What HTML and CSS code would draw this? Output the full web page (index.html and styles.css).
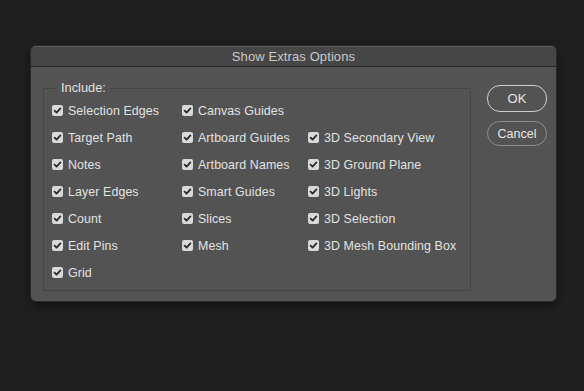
FILE: index.html
```html
<!DOCTYPE html>
<html>
<head>
<meta charset="utf-8">
<link rel="stylesheet" href="styles.css">
</head>
<body>
<div class="dialog">
  <div class="titlebar">Show Extras Options</div>
  <div class="content">
    <fieldset class="group">
      <legend class="legend">Include:</legend>
      <div class="grid">
        <label class="item"><span class="box"><svg viewBox="0 0 11 11"><path d="M2.6 5.6 L4.6 7.6 L8.4 3.4" /></svg></span>Selection Edges</label>
        <label class="item"><span class="box"><svg viewBox="0 0 11 11"><path d="M2.6 5.6 L4.6 7.6 L8.4 3.4" /></svg></span>Canvas Guides</label>
        <span></span>
        <label class="item"><span class="box"><svg viewBox="0 0 11 11"><path d="M2.6 5.6 L4.6 7.6 L8.4 3.4" /></svg></span>Target Path</label>
        <label class="item"><span class="box"><svg viewBox="0 0 11 11"><path d="M2.6 5.6 L4.6 7.6 L8.4 3.4" /></svg></span>Artboard Guides</label>
        <label class="item"><span class="box"><svg viewBox="0 0 11 11"><path d="M2.6 5.6 L4.6 7.6 L8.4 3.4" /></svg></span>3D Secondary View</label>
        <label class="item"><span class="box"><svg viewBox="0 0 11 11"><path d="M2.6 5.6 L4.6 7.6 L8.4 3.4" /></svg></span>Notes</label>
        <label class="item"><span class="box"><svg viewBox="0 0 11 11"><path d="M2.6 5.6 L4.6 7.6 L8.4 3.4" /></svg></span>Artboard Names</label>
        <label class="item"><span class="box"><svg viewBox="0 0 11 11"><path d="M2.6 5.6 L4.6 7.6 L8.4 3.4" /></svg></span>3D Ground Plane</label>
        <label class="item"><span class="box"><svg viewBox="0 0 11 11"><path d="M2.6 5.6 L4.6 7.6 L8.4 3.4" /></svg></span>Layer Edges</label>
        <label class="item"><span class="box"><svg viewBox="0 0 11 11"><path d="M2.6 5.6 L4.6 7.6 L8.4 3.4" /></svg></span>Smart Guides</label>
        <label class="item"><span class="box"><svg viewBox="0 0 11 11"><path d="M2.6 5.6 L4.6 7.6 L8.4 3.4" /></svg></span>3D Lights</label>
        <label class="item"><span class="box"><svg viewBox="0 0 11 11"><path d="M2.6 5.6 L4.6 7.6 L8.4 3.4" /></svg></span>Count</label>
        <label class="item"><span class="box"><svg viewBox="0 0 11 11"><path d="M2.6 5.6 L4.6 7.6 L8.4 3.4" /></svg></span>Slices</label>
        <label class="item"><span class="box"><svg viewBox="0 0 11 11"><path d="M2.6 5.6 L4.6 7.6 L8.4 3.4" /></svg></span>3D Selection</label>
        <label class="item"><span class="box"><svg viewBox="0 0 11 11"><path d="M2.6 5.6 L4.6 7.6 L8.4 3.4" /></svg></span>Edit Pins</label>
        <label class="item"><span class="box"><svg viewBox="0 0 11 11"><path d="M2.6 5.6 L4.6 7.6 L8.4 3.4" /></svg></span>Mesh</label>
        <label class="item"><span class="box"><svg viewBox="0 0 11 11"><path d="M2.6 5.6 L4.6 7.6 L8.4 3.4" /></svg></span>3D Mesh Bounding Box</label>
        <label class="item"><span class="box"><svg viewBox="0 0 11 11"><path d="M2.6 5.6 L4.6 7.6 L8.4 3.4" /></svg></span>Grid</label>
      </div>
    </fieldset>
    <div class="buttons">
      <button class="btn btn-ok">OK</button>
      <button class="btn btn-cancel">Cancel</button>
    </div>
  </div>
</div>
</body>
</html>
```

FILE: styles.css
```css
html, body {
  margin: 0;
  padding: 0;
}
body {
  background: #1f1f1f;
  width: 584px;
  height: 391px;
  padding: 46px 0 0 31px;
  box-sizing: border-box;
  font-family: "Liberation Sans", Arial, sans-serif;
  font-size: 12px;
  color: #e2e2e2;
}
.dialog {
  width: 525px;
  height: 255px;
  background: #535353;
  border-radius: 5px;
  box-shadow: 0 0 0 1px #2a2a2a, 0 4px 10px rgba(0,0,0,0.5);
  overflow: hidden;
  display: flex;
  flex-direction: column;
}
.titlebar {
  height: 19px;
  background: #464646;
  border-top: 1px solid #5c5c5c;
  border-bottom: 1px solid #262626;
  box-sizing: content-box;
  display: flex;
  align-items: center;
  justify-content: center;
  color: #c9c9c9;
  font-size: 13px;
  letter-spacing: 0.1px;
}
.content {
  display: flex;
  flex: 1;
  padding: 13px 9px 0 12px;
}
.group {
  margin: 0;
  padding: 0 0 4px 8px;
  width: 429px;
  height: 211px;
  box-sizing: border-box;
  border: 1px solid #464646;
  border-radius: 1px;
}
.legend {
  margin-left: 5px;
  padding: 0 4px;
  font-size: 12.8px;
  color: #e2e2e2;
  line-height: 16px;
}
.grid {
  display: grid;
  grid-template-columns: 130px 126px auto;
  grid-auto-rows: 27px;
  margin-top: 1px;
}
.item {
  display: flex;
  align-items: center;
  white-space: nowrap;
  font-size: 12.4px;
  letter-spacing: 0.1px;
}
.box {
  width: 11px;
  height: 11px;
  border-radius: 2px;
  background: #d9d9d9;
  margin-right: 5px;
  display: flex;
  flex-shrink: 0;
}
.box svg {
  width: 11px;
  height: 11px;
}
.box path {
  fill: none;
  stroke: #2c2c2c;
  stroke-width: 1.8;
  stroke-linecap: round;
  stroke-linejoin: round;
}
.buttons {
  display: flex;
  flex-direction: column;
  gap: 9px;
  margin-left: 16px;
  margin-top: 5px;
}
.btn {
  width: 60px;
  background: transparent;
  font-family: "Liberation Sans", Arial, sans-serif;
  font-size: 12.5px;
  color: #e6e6e6;
  border-radius: 13px;
  padding: 0;
  cursor: default;
}
.btn-ok {
  height: 27px;
  border: 1.5px solid #cfcfcf;
  font-size: 13px;
}
.btn-cancel {
  height: 25px;
  border: 1px solid #8c8c8c;
}
```
